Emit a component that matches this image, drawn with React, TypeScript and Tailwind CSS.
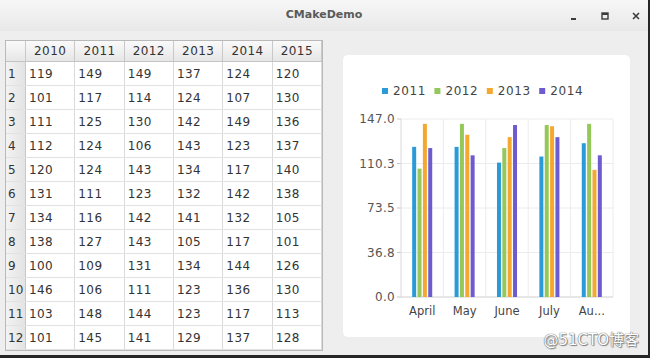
import React from 'react'

const years = ['2010', '2011', '2012', '2013', '2014', '2015'];

const tableRows = [
    [119, 149, 149, 137, 124, 120],
    [101, 117, 114, 124, 107, 130],
    [111, 125, 130, 142, 149, 136],
    [112, 124, 106, 143, 123, 137],
    [120, 124, 143, 134, 117, 140],
    [131, 111, 123, 132, 142, 138],
    [134, 116, 142, 141, 132, 105],
    [138, 127, 143, 105, 117, 101],
    [100, 109, 131, 134, 144, 126],
    [146, 106, 111, 123, 136, 130],
    [103, 148, 144, 123, 117, 113],
    [101, 145, 141, 129, 137, 128],
];

const series = [
    { name: '2011', color: '#2b9bd8' },
    { name: '2012', color: '#95c85a' },
    { name: '2013', color: '#f5a82e' },
    { name: '2014', color: '#6d5bd0' },
];

// values per month, one per series
const months = [
    { label: 'April', values: [124, 106, 143, 123] },
    { label: 'May', values: [124, 143, 134, 117] },
    { label: 'June', values: [111, 123, 132, 142] },
    { label: 'July', values: [116, 142, 141, 132] },
    { label: 'Au...', values: [127, 143, 105, 117] },
];

const TitleBar = () => (
    <div className="relative flex h-[31px] items-center justify-center bg-gradient-to-b from-[#f7f7f7] to-[#e8e8e8]">
        <span className="font-['DejaVu_Sans',sans-serif] text-[11px] font-bold text-[#5a5a5a]">CMakeDemo</span>
        <div className="absolute right-[8px] top-[12px] flex items-center gap-[23px] text-[#3c3c3c]">
            <svg width="8" height="8" viewBox="0 0 8 8"><rect x="1" y="6" width="5" height="2" fill="#3c3c3c" /></svg>
            <svg width="8" height="8" viewBox="0 0 8 8"><rect x="1" y="1" width="6" height="6" fill="none" stroke="#3c3c3c" strokeWidth="1.4" /><rect x="1" y="1" width="6" height="2" fill="#3c3c3c" /></svg>
            <svg width="8" height="8" viewBox="0 0 8 8"><path d="M1 1 L7 7 M7 1 L1 7" stroke="#3c3c3c" strokeWidth="1.6" /></svg>
        </div>
    </div>
)

const DataTable = () => (
    <div className="w-[318px] border border-[#b9b9b9] bg-white font-['DejaVu_Sans',sans-serif] text-[12px] tracking-[0.4px] text-[#333]">
        {/* header */}
        <div className="flex h-[21px] border-b border-[#c4c4c4] bg-gradient-to-b from-[#fafafa] to-[#e6e6e6]">
            <div className="w-[20px] border-r border-[#c8c8c8]" />
            {years.map((y) => (
                <div key={y} className="flex w-[49.4px] items-center justify-center border-r border-[#c8c8c8]">{y}</div>
            ))}
        </div>
        {tableRows.map((row, i) => (
            <div key={i} className="flex h-[24px] border-b border-[#e2e2e2]">
                <div className="flex w-[20px] items-center border-r border-[#c8c8c8] bg-gradient-to-r from-[#f3f3f3] to-[#e3e3e3] pl-[2px] tracking-normal">{i + 1}</div>
                {row.map((v, j) => (
                    <div key={j} className="flex w-[49.4px] items-center border-r border-[#dadada] pl-[3px]">{v}</div>
                ))}
            </div>
        ))}
    </div>
)

const BarChart = () => {
    const left = 58, right = 270, top = 64, bottom = 242;
    const h = bottom - top;
    const catW = (right - left) / months.length;
    const barW = 4, gap = 1.35;
    const groupW = barW * 4 + gap * 3;
    const ticks = [147.0, 110.3, 73.5, 36.8, 0.0];

    return (
        <div className="h-[282px] w-[287px] rounded-[5px] bg-white">
            <svg width="287" height="282" className="font-['DejaVu_Sans',sans-serif]">
                {/* legend */}
                {series.map((s, i) => {
                    const tx = 50 + i * 52.4;
                    return (
                        <g key={s.name}>
                            <rect x={tx - 11} y={33} width={6} height={6} fill={s.color} />
                            <text x={tx} y={40} fontSize="12" fill="#444" letterSpacing="0.6">{s.name}</text>
                        </g>
                    );
                })}

                {/* grid */}
                {ticks.map((t, i) => {
                    const y = top + (h / 4) * i;
                    return (
                        <g key={t}>
                            <line x1={left} x2={right} y1={y} y2={y} stroke="#ececec" />
                            <line x1={left - 4} x2={left} y1={y} y2={y} stroke="#c9c9c9" />
                            <text x={52} y={y + 4} fontSize="12" fill="#555" textAnchor="end" letterSpacing="0.3">{t.toFixed(1)}</text>
                        </g>
                    );
                })}
                {months.map((_, i) => (
                    <line key={i} x1={left + catW * (i + 1)} x2={left + catW * (i + 1)} y1={top} y2={bottom} stroke="#ececec" />
                ))}
                <line x1={left} x2={left} y1={top} y2={bottom} stroke="#d8d8d8" />
                <line x1={left} x2={right} y1={bottom} y2={bottom} stroke="#d8d8d8" />

                {/* bars */}
                {months.map((m, i) => {
                    const x0 = left + catW * i + (catW - groupW) / 2;
                    return (
                        <g key={m.label}>
                            {m.values.map((v, j) => {
                                const bh = (v / 147) * h;
                                return <rect key={j} x={x0 + j * (barW + gap)} y={bottom - bh} width={barW} height={bh} fill={series[j].color} />;
                            })}
                            <text x={left + catW * i + catW / 2} y={260} fontSize="11.5" fill="#444" textAnchor="middle">{m.label}</text>
                        </g>
                    );
                })}
            </svg>
        </div>
    );
}

export default function App() {
    return (
        <div className="relative h-[358px] w-[650px] overflow-hidden border-b-[3px] border-r-2 border-[#262626] bg-[#eeeeee]">
            <TitleBar />
            <div className="flex items-start pl-[5px] pt-[9px]">
                <DataTable />
                <div className="ml-[20px] mt-[15px]">
                    <BarChart />
                </div>
            </div>
            {/* watermark */}
            <div className="absolute bottom-[4px] right-[9px] font-['DejaVu_Sans','Noto_Sans_CJK_SC',sans-serif] text-[15px] text-white [text-shadow:0_0_1px_#666,0_0_1px_#666,1px_1px_1px_#888]">
                @51CTO博客
            </div>
        </div>
    )
}
